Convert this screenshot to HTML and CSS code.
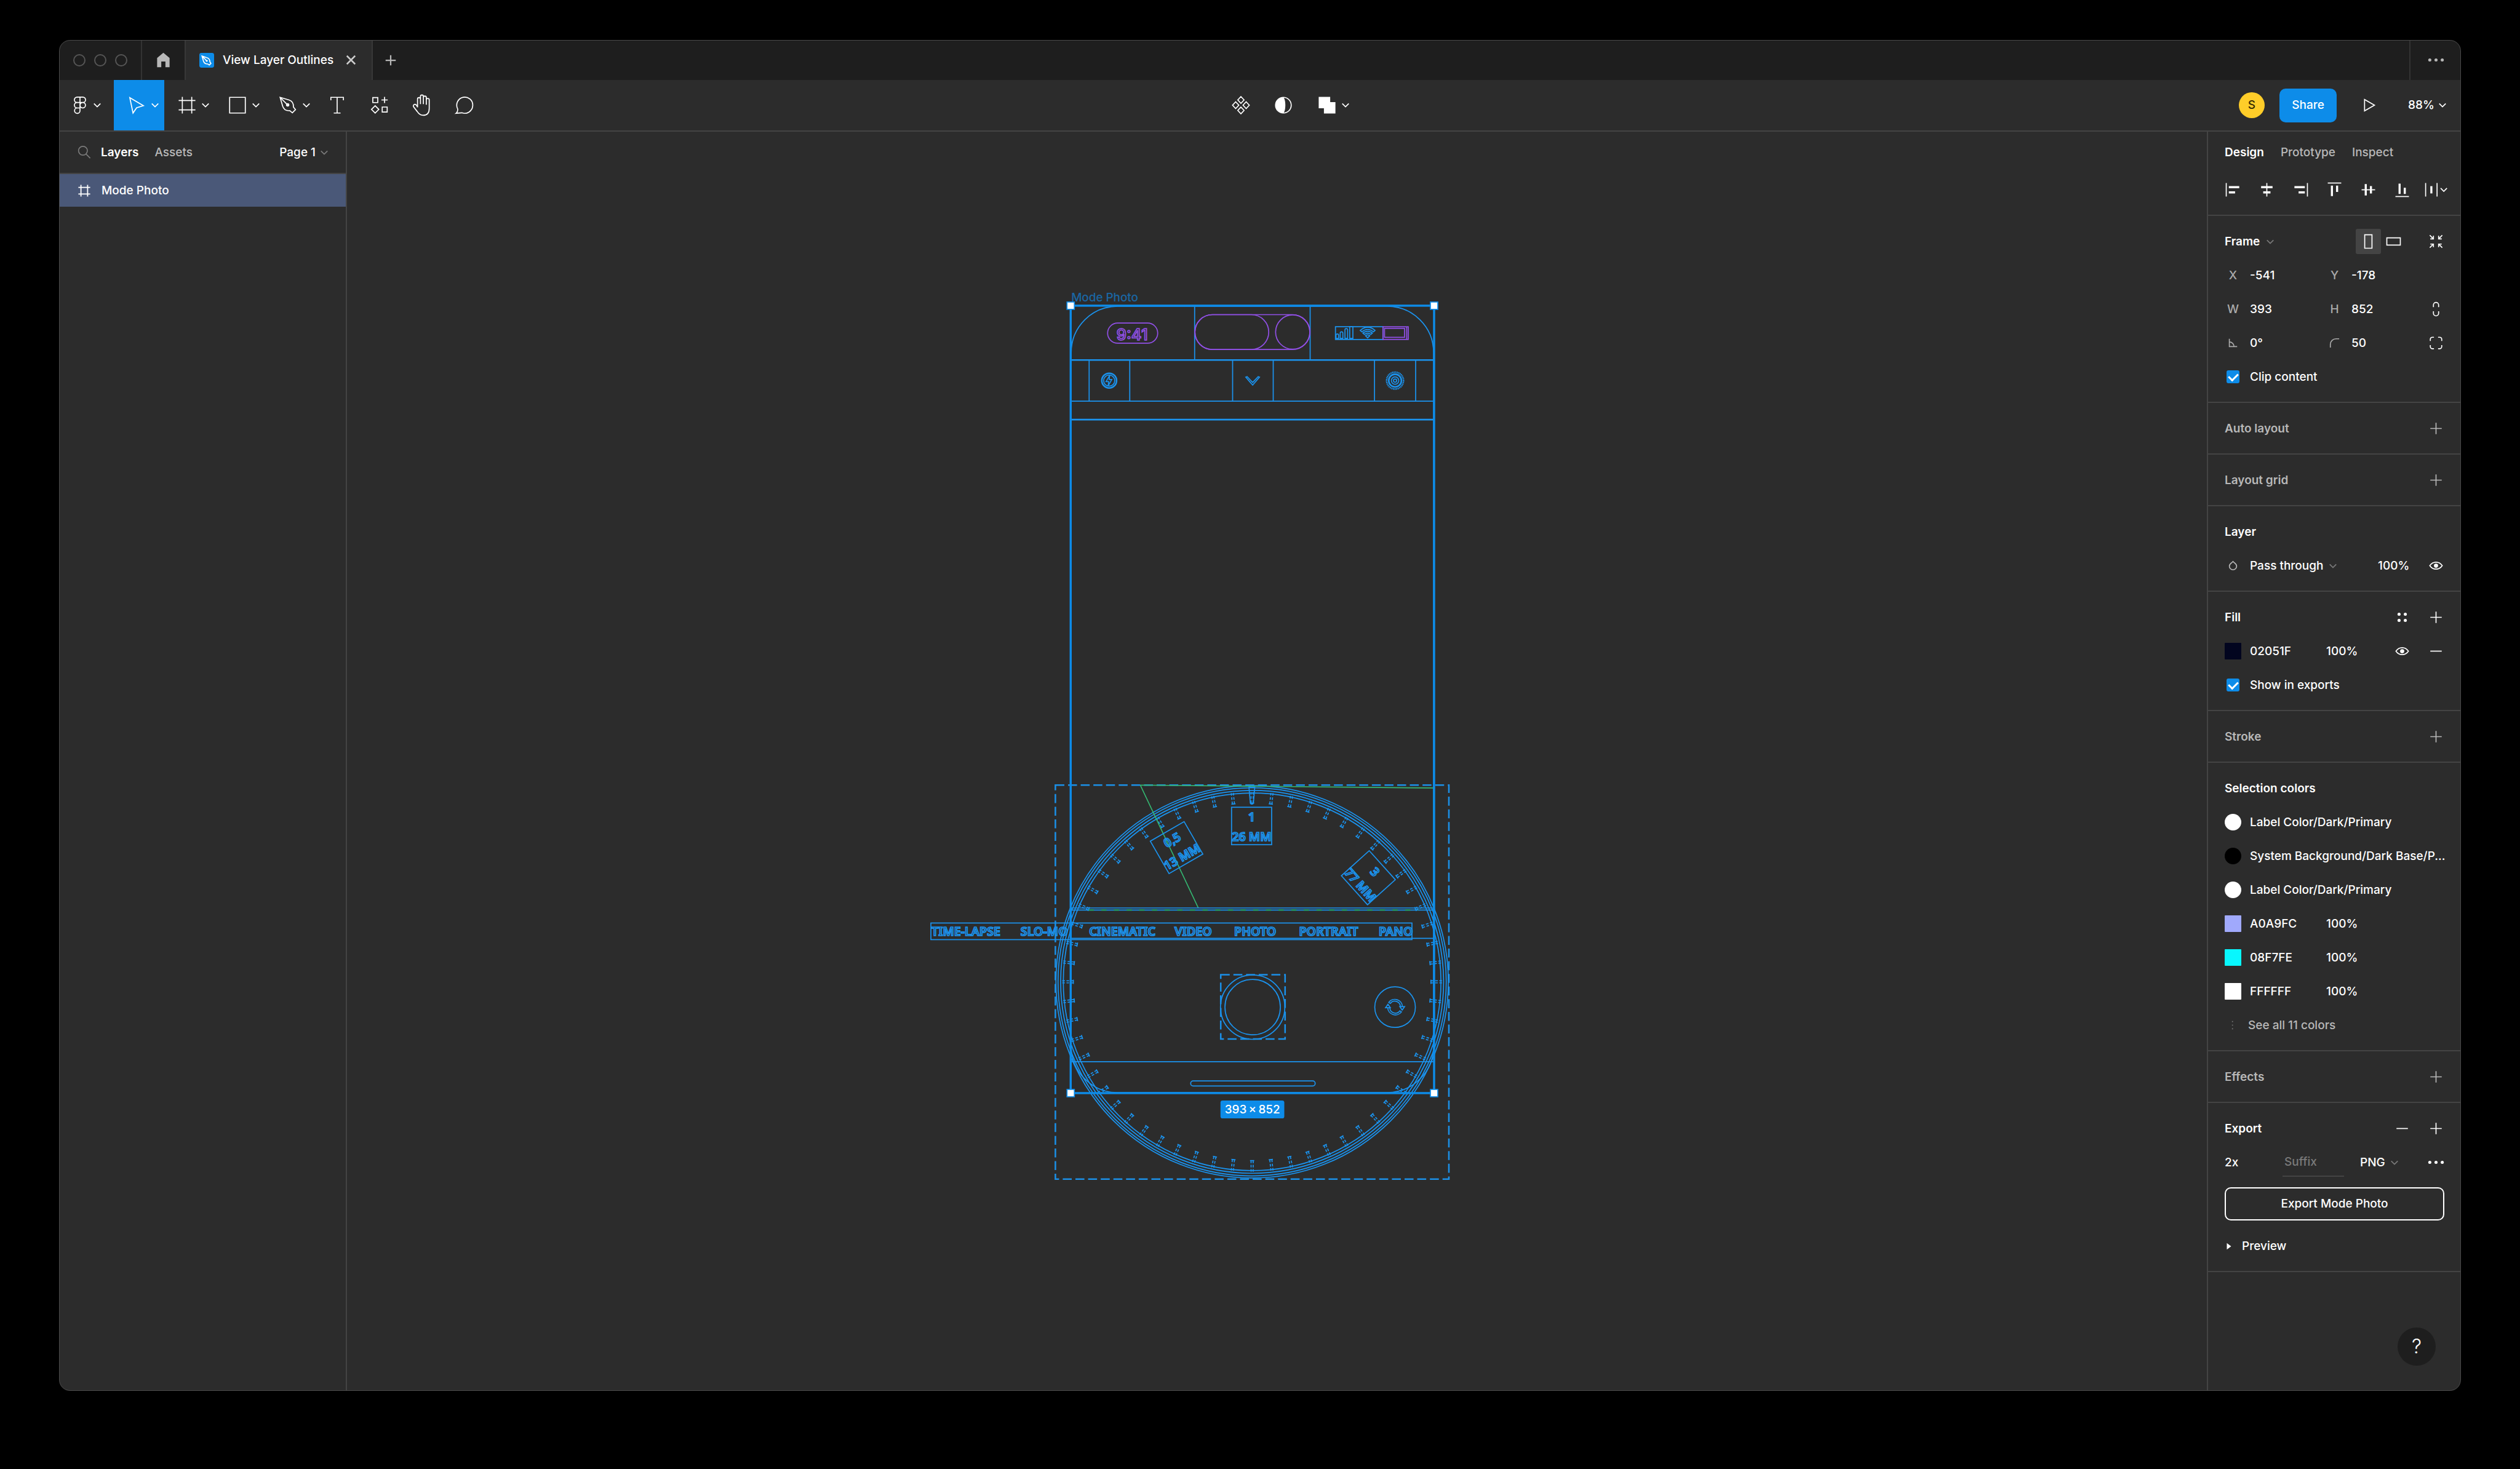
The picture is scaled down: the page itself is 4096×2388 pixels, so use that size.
FILE: index.html
```html
<!DOCTYPE html>
<html lang="en">
<head>
<meta charset="utf-8">
<title>View Layer Outlines</title>
<link rel="stylesheet" href="styles.css">
</head>
<body>
<svg class="sprite" aria-hidden="true">
  <defs>
    <symbol id="i-chev" viewBox="0 0 16 16"><path d="M2 5l6 6 6-6"/></symbol>
    <symbol id="i-plus" viewBox="0 0 32 32"><path d="M16 5v22M5 16h22"/></symbol>
    <symbol id="i-minus" viewBox="0 0 32 32"><path d="M5 16h22"/></symbol>
    <symbol id="i-dots" viewBox="0 0 32 32"><g class="solid"><circle cx="4" cy="16" r="3"/><circle cx="16" cy="16" r="3"/><circle cx="28" cy="16" r="3"/></g></symbol>
    <symbol id="i-eye" viewBox="0 0 32 32"><path d="M4 16c6-9 18-9 24 0-6 9-18 9-24 0z"/><circle class="solid" cx="16" cy="16" r="4"/></symbol>
    <symbol id="i-hash" viewBox="0 0 40 40"><path d="M11 4v32M29 4v32M4 11h32M4 29h32"/></symbol>
    <symbol id="i-figma" viewBox="0 0 40 40"><path d="M20 4.5h-5.5a5.2 5.2 0 0 0 0 10.4H20zM20 4.5h5.5a5.2 5.2 0 0 1 0 10.4H20zM20 14.9h-5.5a5.2 5.2 0 0 0 0 10.4H20zM25.3 14.9a5.2 5.2 0 1 1 0 10.4 5.2 5.2 0 0 1 0-10.4zM14.5 25.3H20v5a5.2 5.2 0 1 1-5.5-5z"/></symbol>
    <symbol id="i-move" viewBox="0 0 40 40"><path d="M7 5.5L33 21l-13 4-6.8 10z"/></symbol>
    <symbol id="i-rect" viewBox="0 0 40 40"><path d="M5 5h30v30H5z"/></symbol>
    <symbol id="i-pen" viewBox="0 0 40 40"><path d="M5 5l17 5c6 2 9 7 8.5 13.500l4 5-6 6-5-4C17 31 12 28 10 22zM5 5l13 13"/><circle class="solid" cx="19.500" cy="19.500" r="3.200"/></symbol>
    <symbol id="i-text" viewBox="0 0 40 40"><path d="M8 10.500V5h24v5.500M20 5v30M13.500 35h13"/></symbol>
    <symbol id="i-res" viewBox="0 0 40 40"><path d="M7 5.500h9.500V15H7zM29.500 4v12M23.500 10h12M11.500 21l7 7-7 7-7-7zM25 23.500h9.500V33H25z"/></symbol>
    <symbol id="i-hand" viewBox="0 0 44 44"><path d="M13.500 26V10.500a2.700 2.700 0 0 1 5.500 0V20M19 20V5.500a2.700 2.700 0 0 1 5.500 0V20M24.500 7.500a2.700 2.700 0 0 1 5.500 0V21M30 12a2.700 2.700 0 0 1 5.500 0v16c0 8-4 13-11.500 13-5 0-8-2.500-11-7L6 25c-1-2 0-4 2-4.500 2-.3 4 1.500 5.500 5.500"/></symbol>
    <symbol id="i-comment" viewBox="0 0 40 40"><path d="M4 35.500c2.500-2 3.500-4.500 2.800-8.500A15.300 15.500 0 1 1 15 34.500z"/></symbol>
    <symbol id="i-comp" viewBox="0 0 40 40"><path d="M20 3.500l6 6.500-6 6.500-6-6.500zM20 23.500l6 6.500-6 6.500-6-6.500zM10 13.500l6 6.500-6 6.500L4 20zM30 13.500l6 6.500-6 6.500-6-6.500z"/></symbol>
    <symbol id="i-mask" viewBox="0 0 40 40"><circle cx="20" cy="20" r="15"/><path class="solid" d="M20 5a15 15 0 0 0 0 30c5-4 5-26 0-30z"/></symbol>
    <symbol id="i-union" viewBox="0 0 40 40"><path class="solid" d="M4 4h22v10h10v22H14V26H4z"/></symbol>
    <symbol id="i-play" viewBox="0 0 40 40"><path d="M11 9l19 11-19 11z"/></symbol>
    <symbol id="i-home" viewBox="0 0 32 32"><path class="solid" d="M16 2L4 12v18h8V19h8v11h8V12z"/></symbol>
    <symbol id="i-close" viewBox="0 0 32 32"><path d="M8 8l16 16M24 8L8 24"/></symbol>
    <symbol id="i-search" viewBox="0 0 32 32"><circle cx="14" cy="13" r="8.500"/><path d="M20 19.500l8 8"/></symbol>
    <symbol id="i-al" viewBox="0 0 32 32"><path d="M3 3v26"/><path class="solid" d="M8 9h20v4H8zM8 19h12v4H8z"/></symbol>
    <symbol id="i-ac" viewBox="0 0 32 32"><path d="M16 3v26"/><path class="solid" d="M5 9h22v4H5zM9 19h14v4H9z"/></symbol>
    <symbol id="i-ar" viewBox="0 0 32 32"><path d="M29 3v26"/><path class="solid" d="M4 9h20v4H4zM12 19h12v4H12z"/></symbol>
    <symbol id="i-at" viewBox="0 0 32 32"><path d="M3 3h26"/><path class="solid" d="M9 8h4v20H9zM19 8h4v12h-4z"/></symbol>
    <symbol id="i-am" viewBox="0 0 32 32"><path d="M3 16h26"/><path class="solid" d="M9 5h4v22H9zM19 9h4v14h-4z"/></symbol>
    <symbol id="i-ab" viewBox="0 0 32 32"><path d="M3 29h26"/><path class="solid" d="M9 4h4v20H9zM19 12h4v12h-4z"/></symbol>
    <symbol id="i-dist" viewBox="0 0 48 32"><path d="M4 3v26M26 3v26M33 13l6 6 6-6"/><path class="solid" d="M13 9h4v14h-4z"/></symbol>
    <symbol id="i-port" viewBox="0 0 32 32"><path d="M9 3h14v26H9z"/></symbol>
    <symbol id="i-land" viewBox="0 0 32 32"><path d="M3 9h26v14H3z"/></symbol>
    <symbol id="i-fit" viewBox="0 0 32 32"><path d="M4 4l7 7M5 11h6V5M28 4l-7 7M27 11h-6V5M4 28l7-7M5 21h6v6M28 28l-7-7M27 21h-6v6"/></symbol>
    <symbol id="i-link" viewBox="0 0 32 32"><path d="M11 12V8a5 5 0 0 1 10 0v4M11 20v4a5 5 0 0 0 10 0v-4"/></symbol>
    <symbol id="i-corners" viewBox="0 0 32 32"><path d="M5 12V9a4 4 0 0 1 4-4h3M20 5h3a4 4 0 0 1 4 4v3M27 20v3a4 4 0 0 1-4 4h-3M12 27H9a4 4 0 0 1-4-4v-3"/></symbol>
    <symbol id="i-angle" viewBox="0 0 32 32"><path d="M9 8v15h15M9 14a9 9 0 0 1 9 9"/></symbol>
    <symbol id="i-radius" viewBox="0 0 32 32"><path d="M8 25v-6A11 11 0 0 1 19 8h6"/></symbol>
    <symbol id="i-drop" viewBox="0 0 32 32"><path d="M16 8c2.500 3 7 4.500 7 9a7 7 0 1 1-14 0c0-4.500 4.500-6 7-9z"/></symbol>
    <symbol id="i-four" viewBox="0 0 32 32"><g class="solid"><circle cx="10" cy="10" r="3"/><circle cx="22" cy="10" r="3"/><circle cx="10" cy="22" r="3"/><circle cx="22" cy="22" r="3"/></g></symbol>
    <symbol id="i-vdots" viewBox="0 0 32 32"><path class="solid" d="M14 8h2v2h-2zM14 15h2v2h-2zM14 22h2v2h-2z"/></symbol>
    <symbol id="i-tri" viewBox="0 0 16 16"><path class="solid" d="M4 2l8 6-8 6z"/></symbol>
  </defs>
</svg>

<main class="window">
  <header class="tabbar">
    <div class="lights"><span class="light"></span><span class="light"></span><span class="light"></span></div>
    <button class="home" aria-label="Home"><svg class="icon"><use href="#i-home"/></svg></button>
    <div class="tab">
      <svg class="tab-logo" viewBox="0 0 28 28"><rect class="logo-bg" width="28" height="28" rx="4"/><path class="logo-line" d="M5 6l9 3c4 1 6 4 6 8l2 3-3 3-3-2c-4 0-7-2-8-5zM5 6l8 8"/><circle class="solid" cx="14" cy="15" r="2"/></svg>
      <span class="tab-name">View Layer Outlines</span>
      <button class="bare" aria-label="Close tab"><svg class="icon thick"><use href="#i-close"/></svg></button>
    </div>
    <button class="newtab" aria-label="New tab"><svg class="icon thick"><use href="#i-plus"/></svg></button>
    <button class="more" aria-label="More"><svg class="icon"><use href="#i-dots"/></svg></button>
  </header>

  <nav class="toolbar">
    <div class="tools">
      <button class="tool menu" aria-label="Main menu"><svg class="glyph"><use href="#i-figma"/></svg><svg class="chev"><use href="#i-chev"/></svg></button>
      <button class="tool drop active" aria-label="Move"><svg class="glyph"><use href="#i-move"/></svg><svg class="chev"><use href="#i-chev"/></svg></button>
      <button class="tool drop" aria-label="Frame"><svg class="glyph"><use href="#i-hash"/></svg><svg class="chev"><use href="#i-chev"/></svg></button>
      <button class="tool drop" aria-label="Rectangle"><svg class="glyph"><use href="#i-rect"/></svg><svg class="chev"><use href="#i-chev"/></svg></button>
      <button class="tool drop" aria-label="Pen"><svg class="glyph"><use href="#i-pen"/></svg><svg class="chev"><use href="#i-chev"/></svg></button>
      <button class="tool" aria-label="Text"><svg class="glyph"><use href="#i-text"/></svg></button>
      <button class="tool" aria-label="Resources"><svg class="glyph"><use href="#i-res"/></svg></button>
      <button class="tool" aria-label="Hand"><svg class="glyph hand"><use href="#i-hand"/></svg></button>
      <button class="tool" aria-label="Comment"><svg class="glyph"><use href="#i-comment"/></svg></button>
    </div>
    <div class="tools middle">
      <button class="tool" aria-label="Create component"><svg class="glyph"><use href="#i-comp"/></svg></button>
      <button class="tool" aria-label="Mask"><svg class="glyph"><use href="#i-mask"/></svg></button>
      <button class="tool drop" aria-label="Union"><svg class="glyph"><use href="#i-union"/></svg><svg class="chev"><use href="#i-chev"/></svg></button>
    </div>
    <div class="tools right">
      <span class="avatar">S</span>
      <button class="share">Share</button>
      <button class="tool play" aria-label="Present"><svg class="glyph"><use href="#i-play"/></svg></button>
      <button class="zoom">88%<svg class="chev"><use href="#i-chev"/></svg></button>
    </div>
  </nav>

  <div class="body">
    <aside class="layers">
      <div class="layers-head">
        <button class="bare" aria-label="Search"><svg class="icon dim"><use href="#i-search"/></svg></button>
        <button class="bare strong">Layers</button>
        <button class="bare second">Assets</button>
        <button class="bare page">Page 1<svg class="chev dim"><use href="#i-chev"/></svg></button>
      </div>
      <div class="layer-row"><svg class="icon small"><use href="#i-hash"/></svg><span>Mode Photo</span></div>
    </aside>

    <section class="canvas" aria-label="Canvas">
      <svg class="art" viewBox="658 250 3526 2388">
        <defs>
          <g id="tick"><path class="dash-tick" d="M-2 -339v-24M2 -339v-24"/><path d="M-4 -339h8"/></g>
          <g id="tick5"><use href="#tick"/><use href="#tick" transform="rotate(6)"/><use href="#tick" transform="rotate(12)"/><use href="#tick" transform="rotate(18)"/><use href="#tick" transform="rotate(24)"/></g>
          <g id="tick15"><use href="#tick5"/><use href="#tick5" transform="rotate(30)"/><use href="#tick5" transform="rotate(60)"/></g>
        </defs>

        <text class="frame-name" x="2031" y="572">Mode Photo</text>

        <g class="outline">
          <rect x="2031" y="581" width="687" height="1491" rx="88"/>
          <path d="M2265 580v103M2484 580v103M2065 683v78M2142 683v78M2337 683v78M2414 683v78M2606 683v78M2684 683v78"/>
          <path d="M2030 761h689"/>
          <path class="bold" d="M2030 683h689M2030 796h689"/>

          <path d="M2532 620h90v24h-90z"/>
          <path d="M2533 642v-6a2.500 2.500 0 0 1 5 0v6zM2541 642v-10a2.500 2.500 0 0 1 5 0v10zM2550 642v-16a2.500 2.500 0 0 1 5 0v16zM2559 620h6v22h-6z"/>
          <path d="M2579 627c8-8 20-8 28 0l-3 2.500c-7-5.500-15-5.500-22 0zM2584 632c5-4.500 13-4.500 18 0l-3 2.500c-4-3-8-3-12 0zM2589 637c2.500-2 5.500-2 8 0l-4 4z"/>

          <circle class="bold" cx="2103" cy="722" r="14"/>
          <circle cx="2103" cy="722" r="10.500"/>
          <path class="thin" d="M2104 712l-7 12h5l-1 8 7-12h-5z"/>
          <path class="thin" d="M2362 715.500l2.500-1 10.500 11 10.500-11 2.500 1-13 15z"/>
          <circle class="dial-dots" cx="2645" cy="722" r="16"/>
          <circle class="bold" cx="2645" cy="722" r="12"/>
          <circle cx="2645" cy="722" r="7"/>
          <circle cx="2645" cy="722" r="3"/>
        </g>

        <g class="outline violet">
          <rect x="2100" y="613" width="95" height="38" rx="19"/>
          <text class="clock" x="2117" y="646">9:41</text>
          <rect x="2265.500" y="597" width="218" height="66" rx="33"/>
          <rect x="2265.500" y="597" width="140" height="66" rx="33"/>
          <circle cx="2451" cy="630" r="32.500"/>
          <rect x="2622" y="620" width="48" height="24"/>
          <rect x="2625" y="623" width="38" height="17"/>
          <path d="M2667 620v24"/>
        </g>

        <path class="dashed" d="M2001 1489h746v747h-746z"/>
        <g class="outline">
          <circle cx="2374" cy="1862" r="372"/>
          <circle cx="2374" cy="1862" r="368"/>
          <circle cx="2374" cy="1862" r="363"/>
          <circle cx="2374" cy="1862" r="358"/>
          <g transform="translate(2374 1862)">
            <use href="#tick15"/><use href="#tick15" transform="rotate(90)"/><use href="#tick15" transform="rotate(180)"/><use href="#tick15" transform="rotate(270)"/>
          </g>
          <path d="M2368 1493h11l-2.500 29a3 3 0 0 1-6 0z"/>
        </g>
        <path class="green" d="M2162 1489l110 233M2162 1489l556 5.500"/>
        <path class="teal" d="M2718 1495v230"/>

        <g class="outline">
          <g transform="translate(2373 1567)">
            <rect x="-38" y="-36" width="76" height="71"/>
            <text class="lens" x="0" y="-9">1</text><text class="lens" x="0" y="28">26 MM</text>
          </g>
          <g transform="translate(2231 1608) rotate(-30)">
            <rect x="-37" y="-36" width="74" height="71"/>
            <text class="lens" x="0" y="-9">0,5</text><text class="lens" x="0" y="28">13 MM</text>
          </g>
          <g transform="translate(2594 1665) rotate(48)">
            <rect x="-37" y="-36" width="74" height="71"/>
            <text class="lens" x="0" y="-9">3</text><text class="lens" x="0" y="28">77 MM</text>
          </g>

          <path d="M2030 1722h689M2030 1726h689M2030 1779.500h689"/>
        </g>
        <path class="green-dash" d="M2064 1726h625"/>

        <g class="outline">
          <rect x="1765" y="1750.500" width="912" height="31.500"/>
          <text class="mode" x="1766" y="1775">TIME-LAPSE</text>
          <text class="mode" x="1935" y="1775">SLO-MO</text>
          <text class="mode" x="2065" y="1775">CINEMATIC</text>
          <text class="mode" x="2227" y="1775">VIDEO</text>
          <text class="mode" x="2340" y="1775">PHOTO</text>
          <text class="mode" x="2463" y="1775">PORTRAIT</text>
          <text class="mode" x="2614" y="1775">PANO</text>

          <circle cx="2375" cy="1910" r="61"/>
          <circle cx="2375" cy="1910" r="52.500"/>
          <circle cx="2645" cy="1910" r="38.500"/>
          <path d="M2633 1901a14.500 14.500 0 0 1 26 8h-4a10.500 10.500 0 0 0-19-6zM2654 1909h9l-4.500 6.500zM2657 1919a14.500 14.500 0 0 1-26-8h4a10.500 10.500 0 0 0 19 6zM2636 1911h-9l4.500-6.500z"/>
          <path d="M2030 2013.500h689"/>
          <rect x="2257.500" y="2050" width="236" height="9.500" rx="4.500"/>
        </g>
        <path class="dashed" d="M2314.500 1848.500h122v122h-122z"/>

        <rect class="selection" x="2030" y="580" width="689" height="1493"/>
        <g class="handles">
          <rect x="2023" y="573" width="14" height="14"/><rect x="2712" y="573" width="14" height="14"/>
          <rect x="2023" y="2066" width="14" height="14"/><rect x="2712" y="2066" width="14" height="14"/>
        </g>
        <rect class="size-bg" x="2314" y="2087" width="121" height="34" rx="4"/>
        <text class="size" x="2374.500" y="2112">393&#8201;×&#8201;852</text>
      </svg>
    </section>

    <aside class="inspector">
      <div class="modes">
        <button class="bare strong">Design</button>
        <button class="bare second">Prototype</button>
        <button class="bare second">Inspect</button>
      </div>
      <div class="align">
        <button class="bare" aria-label="Align left"><svg class="icon"><use href="#i-al"/></svg></button>
        <button class="bare" aria-label="Align horizontal centers"><svg class="icon"><use href="#i-ac"/></svg></button>
        <button class="bare" aria-label="Align right"><svg class="icon"><use href="#i-ar"/></svg></button>
        <button class="bare" aria-label="Align top"><svg class="icon"><use href="#i-at"/></svg></button>
        <button class="bare" aria-label="Align vertical centers"><svg class="icon"><use href="#i-am"/></svg></button>
        <button class="bare" aria-label="Align bottom"><svg class="icon"><use href="#i-ab"/></svg></button>
        <button class="bare dist" aria-label="Distribute"><svg class="icon wide"><use href="#i-dist"/></svg></button>
      </div>

      <section class="block">
        <div class="row head">
          <button class="bare strong frame-type">Frame<svg class="chev dim"><use href="#i-chev"/></svg></button>
          <span class="orient">
            <button class="square on" aria-label="Portrait"><svg class="icon"><use href="#i-port"/></svg></button>
            <button class="square" aria-label="Landscape"><svg class="icon"><use href="#i-land"/></svg></button>
          </span>
          <button class="bare" aria-label="Resize to fit"><svg class="icon"><use href="#i-fit"/></svg></button>
        </div>
        <div class="row fields">
          <label for="fx">X</label><input id="fx" value="-541">
          <label for="fy">Y</label><input id="fy" value="-178">
        </div>
        <div class="row fields">
          <label for="fw">W</label><input id="fw" value="393">
          <label for="fh">H</label><input id="fh" value="852">
          <button class="bare" aria-label="Constrain proportions"><svg class="icon"><use href="#i-link"/></svg></button>
        </div>
        <div class="row fields">
          <label for="fr" aria-label="Rotation"><svg class="icon"><use href="#i-angle"/></svg></label><input id="fr" value="0°">
          <label for="fc" aria-label="Corner radius"><svg class="icon"><use href="#i-radius"/></svg></label><input id="fc" value="50">
          <button class="bare" aria-label="Independent corners"><svg class="icon"><use href="#i-corners"/></svg></button>
        </div>
        <div class="row check"><input type="checkbox" id="clip" checked><label for="clip">Clip content</label></div>
      </section>

      <section class="block"><div class="row head"><h2 class="off">Auto layout</h2><button class="bare second" aria-label="Add auto layout"><svg class="icon"><use href="#i-plus"/></svg></button></div></section>
      <section class="block"><div class="row head"><h2 class="off">Layout grid</h2><button class="bare second" aria-label="Add layout grid"><svg class="icon"><use href="#i-plus"/></svg></button></div></section>

      <section class="block">
        <div class="row head"><h2>Layer</h2></div>
        <div class="row blend">
          <label for="blend" aria-label="Blend mode"><svg class="icon second"><use href="#i-drop"/></svg></label>
          <span class="select"><select id="blend"><option>Pass through</option></select><svg class="chev dim"><use href="#i-chev"/></svg></span>
          <input class="opacity" aria-label="Opacity" value="100%">
          <button class="bare" aria-label="Toggle visibility"><svg class="icon"><use href="#i-eye"/></svg></button>
        </div>
      </section>

      <section class="block">
        <div class="row head"><h2>Fill</h2><button class="bare" aria-label="Styles"><svg class="icon"><use href="#i-four"/></svg></button><button class="bare" aria-label="Add fill"><svg class="icon"><use href="#i-plus"/></svg></button></div>
        <div class="row color">
          <span class="swatch navy"></span><input aria-label="Fill color" value="02051F"><input aria-label="Fill opacity" value="100%">
          <button class="bare" aria-label="Toggle fill"><svg class="icon"><use href="#i-eye"/></svg></button>
          <button class="bare" aria-label="Remove fill"><svg class="icon"><use href="#i-minus"/></svg></button>
        </div>
        <div class="row check"><input type="checkbox" id="exports" checked><label for="exports">Show in exports</label></div>
      </section>

      <section class="block"><div class="row head"><h2 class="off">Stroke</h2><button class="bare second" aria-label="Add stroke"><svg class="icon"><use href="#i-plus"/></svg></button></div></section>

      <section class="block">
        <div class="row head"><h2>Selection colors</h2></div>
        <div class="row style"><span class="swatch round white"></span><span class="name">Label Color/Dark/Primary</span></div>
        <div class="row style"><span class="swatch round black"></span><span class="name">System Background/Dark Base/P...</span></div>
        <div class="row style"><span class="swatch round white"></span><span class="name">Label Color/Dark/Primary</span></div>
        <div class="row color"><span class="swatch lilac"></span><input aria-label="Color" value="A0A9FC"><input aria-label="Opacity" value="100%"></div>
        <div class="row color"><span class="swatch cyan"></span><input aria-label="Color" value="08F7FE"><input aria-label="Opacity" value="100%"></div>
        <div class="row color"><span class="swatch white"></span><input aria-label="Color" value="FFFFFF"><input aria-label="Opacity" value="100%"></div>
        <div class="row see-all"><svg class="icon dim"><use href="#i-vdots"/></svg><button class="bare second">See all 11 colors</button></div>
      </section>

      <section class="block"><div class="row head"><h2 class="off">Effects</h2><button class="bare second" aria-label="Add effect"><svg class="icon"><use href="#i-plus"/></svg></button></div></section>

      <section class="block">
        <div class="row head"><h2>Export</h2><button class="bare" aria-label="Remove export"><svg class="icon"><use href="#i-minus"/></svg></button><button class="bare" aria-label="Add export"><svg class="icon"><use href="#i-plus"/></svg></button></div>
        <div class="row export">
          <input aria-label="Scale" value="2x">
          <input class="suffix" aria-label="Suffix" placeholder="Suffix">
          <span class="select"><select aria-label="Format"><option>PNG</option></select><svg class="chev dim"><use href="#i-chev"/></svg></span>
          <button class="bare" aria-label="Export options"><svg class="icon"><use href="#i-dots"/></svg></button>
        </div>
        <button class="export-btn">Export Mode Photo</button>
        <button class="row preview"><svg class="tri"><use href="#i-tri"/></svg>Preview</button>
      </section>
      <button class="help" aria-label="Help">?</button>
    </aside>
  </div>
</main>
</body>
</html>
```

FILE: styles.css
```css
:root {
  --bg: #2c2c2c;
  --bar: #1e1e1e;
  --line: #444;
  --blue: #0d8ce9;
  --ink: #fff;
  --second: #b8b8b8;
  --dim: #7a7a7a;
}

* { box-sizing: border-box; }

body {
  margin: 0;
  min-height: 100vh;
  padding: 65px 96px 127px;
  display: flex;
  background: #000;
  color: var(--ink);
  font: 450 19px/28px Inter, "Liberation Sans", sans-serif;
}

button, input, select {
  margin: 0;
  padding: 0;
  border: 0;
  border-radius: 0;
  background: none;
  color: inherit;
  font: inherit;
}
input { min-width: 0; width: 100%; }
select { appearance: none; }
h2 { margin: 0; font-size: 19px; font-weight: 600; line-height: 28px; }

svg { display: block; flex: none; fill: none; stroke: currentColor; stroke-width: 2; }
.solid { fill: currentColor; stroke: none; }
.sprite { position: absolute; width: 0; height: 0; }
.icon { width: 27px; height: 27px; }
.icon.small { width: 24px; height: 24px; stroke-width: 3; }
.icon.wide { width: 41px; }
.icon.thick { stroke-width: 3; }
.glyph { width: 34px; height: 34px; }
.glyph.hand { width: 38px; height: 38px; }
.chev { width: 14px; height: 14px; }
.dim { color: var(--dim); }
.second { color: var(--second); }
.strong { font-weight: 600; }
.bare { display: flex; align-items: center; }

.window {
  flex: 1;
  display: flex;
  flex-direction: column;
  overflow: hidden;
  border-radius: 18px;
  background: var(--bg);
  position: relative;
}
.window::after {
  content: "";
  position: absolute;
  inset: 0;
  border: 1px solid #4a4a4a;
  border-radius: 18px;
  pointer-events: none;
}

/* Tab bar */
.tabbar { display: flex; height: 65px; background: var(--bar); color: var(--second); }
.lights { display: flex; align-items: center; gap: 14px; width: 135px; padding-left: 23px; border-right: 2px solid #333; }
.light { width: 20px; height: 20px; border: 2px solid #555; border-radius: 50%; }
.home { display: grid; place-items: center; width: 69px; }
.tab { display: flex; align-items: center; width: 306px; padding: 0 20px 0 22px; background: var(--bg); border: solid #383838; border-width: 0 2px; color: var(--ink); font-weight: 500; }
.tab-logo { width: 24px; height: 24px; margin-right: 14px; }
.logo-bg { fill: var(--blue); stroke: none; }
.logo-line { stroke-width: 2; }
.tab-name { flex: 1; white-space: nowrap; }
.tab .bare { color: #ccc; }
.newtab { display: grid; place-items: center; width: 58px; }
.newtab .icon { width: 24px; height: 24px; }
.more { display: grid; place-items: center; width: 84px; margin-left: auto; border-left: 2px solid #333; }

/* Toolbar */
.toolbar { display: grid; grid-template-columns: 1fr auto 1fr; height: 84px; border-bottom: 2px solid var(--line); }
.tools { display: flex; align-items: stretch; }
.middle { margin-left: 88px; }
.right { justify-content: flex-end; align-items: center; }
.tool { display: flex; align-items: center; justify-content: center; width: 69px; }
.tool.drop { width: 82px; justify-content: flex-end; gap: 6px; padding-right: 8px; }
.tool.menu { width: 89px; gap: 4px; padding-right: 3px; }
.tool.active { background: var(--blue); }
.tool.play { margin-left: 18px; }
.avatar { display: grid; place-items: center; width: 42px; height: 42px; border-radius: 50%; background: #ffcd29; color: #332800; }
.share { width: 93px; height: 55px; margin-left: 24px; border-radius: 10px; background: var(--blue); font-weight: 500; }
.zoom { display: flex; align-items: center; justify-content: space-between; width: 115px; padding: 0 23px 0 29px; }

/* Body */
.body { flex: 1; display: flex; min-height: 0; }
.layers { width: 468px; border-right: 2px solid var(--line); }
.layers-head { display: flex; align-items: center; gap: 26px; height: 69px; padding: 0 28px 0 27px; border-bottom: 2px solid var(--line); }
.layers-head .bare:first-child { margin-right: -12px; }
.page { gap: 7px; margin-left: auto; }
.layer-row { display: flex; align-items: center; gap: 16px; height: 53px; padding-left: 29px; background: #4a5878; font-weight: 500; }

.canvas { flex: 1; min-width: 0; }
.art { width: 100%; height: 100%; }
.outline { stroke: #1b93ee; }
.violet { stroke: #9150e6; }
.bold { stroke-width: 3; }
.thin { stroke-width: 2; }
.dial-dots { stroke-width: 3; stroke-dasharray: 2 1; }
.dash-tick { stroke-dasharray: 5 3; }
.dashed { stroke: #1b8fe6; stroke-width: 3; stroke-dasharray: 17 7; }
.green { stroke: #35b872; }
.teal { stroke: #2aa79a; }
.green-dash { stroke: #22b05a; stroke-dasharray: 10 14; }
.selection { stroke: var(--blue); stroke-width: 4; }
.handles { fill: #fff; stroke: var(--blue); }
.size-bg { fill: var(--blue); stroke: none; }
.art text { font-family: Inter, "Liberation Sans", sans-serif; }
.frame-name { fill: #1a66a3; stroke: none; font-size: 22px; }
.size { fill: #fff; stroke: none; font-size: 22px; font-weight: 500; text-anchor: middle; }
.art .clock { font-size: 30px; font-weight: 500; }
.art .mode { font-family: "Noto Sans", sans-serif; font-size: 23px; font-weight: 600; }
.art .lens { font-family: "Noto Sans", sans-serif; font-size: 23px; font-weight: 600; text-anchor: middle; }

/* Inspector */
.inspector { position: relative; width: 413px; border-left: 2px solid var(--line); }
.modes { display: flex; align-items: center; gap: 27px; height: 68px; padding: 0 27px; }
.align { display: flex; align-items: flex-start; justify-content: space-between; height: 69px; padding: 13px 27px 0; border-bottom: 2px solid var(--line); }
.dist { width: 27px; justify-content: center; }
.block { padding: 14px 27px 13px; border-bottom: 2px solid var(--line); }
.row { display: grid; align-items: center; height: 55px; }
.head { grid-template-columns: 1fr; grid-auto-columns: auto; grid-auto-flow: column; column-gap: 28px; }
.off { color: var(--second); }
.frame-type { gap: 10px; }
.orient { display: flex; margin-right: 7px; }
.square { display: grid; place-items: center; width: 41px; height: 41px; border-radius: 3px; }
.square.on { background: #444; }
.fields { grid-template-columns: 27px 110px 27px 1fr 27px; column-gap: 14px; }
.fields label { display: grid; place-items: center; color: #aaa; }
.check { grid-template-columns: 27px 1fr; column-gap: 14px; }
.check input { appearance: none; display: grid; place-items: center; justify-self: center; width: 21px; height: 21px; border-radius: 3px; background: var(--blue); }
.check input::after { content: ""; width: 7px; height: 12px; margin-bottom: 3px; border: solid #fff; border-width: 0 3px 3px 0; rotate: 45deg; }
.select { display: flex; align-items: center; gap: 8px; }
.blend { grid-template-columns: 27px 194px 1fr 27px; column-gap: 14px; }
.color { grid-template-columns: 27px 110px 82px 41px 1fr; column-gap: 14px; }
.color button { justify-self: end; }
.style { grid-template-columns: 27px 1fr; column-gap: 14px; }
.name { white-space: nowrap; }
.swatch { width: 27px; height: 27px; border-radius: 1px; }
.round { border-radius: 50%; }
.navy { background: #02051f; }
.white { background: #fff; }
.black { background: #000; }
.lilac { background: #a0a9fc; }
.cyan { background: #08f7fe; }
.see-all { grid-template-columns: 27px 1fr; column-gap: 11px; }
.export { grid-template-columns: 94px 100px 1fr 27px; }
.suffix { height: 47px; padding-left: 3px; border-bottom: 2px solid #444; }
.suffix::placeholder { color: var(--dim); opacity: 1; }
.export .select { padding-left: 26px; }
.export-btn { display: block; width: 100%; height: 54px; margin: 13px 0 14px; border: 2px solid #fff; border-radius: 10px; }
.preview { grid-template-columns: 14px auto; column-gap: 14px; justify-content: start; }
.tri { width: 14px; height: 14px; }
.help { position: absolute; right: 41px; bottom: 41px; width: 62px; height: 62px; border-radius: 50%; background: var(--bar); font-size: 32px; font-weight: 300; }
```
